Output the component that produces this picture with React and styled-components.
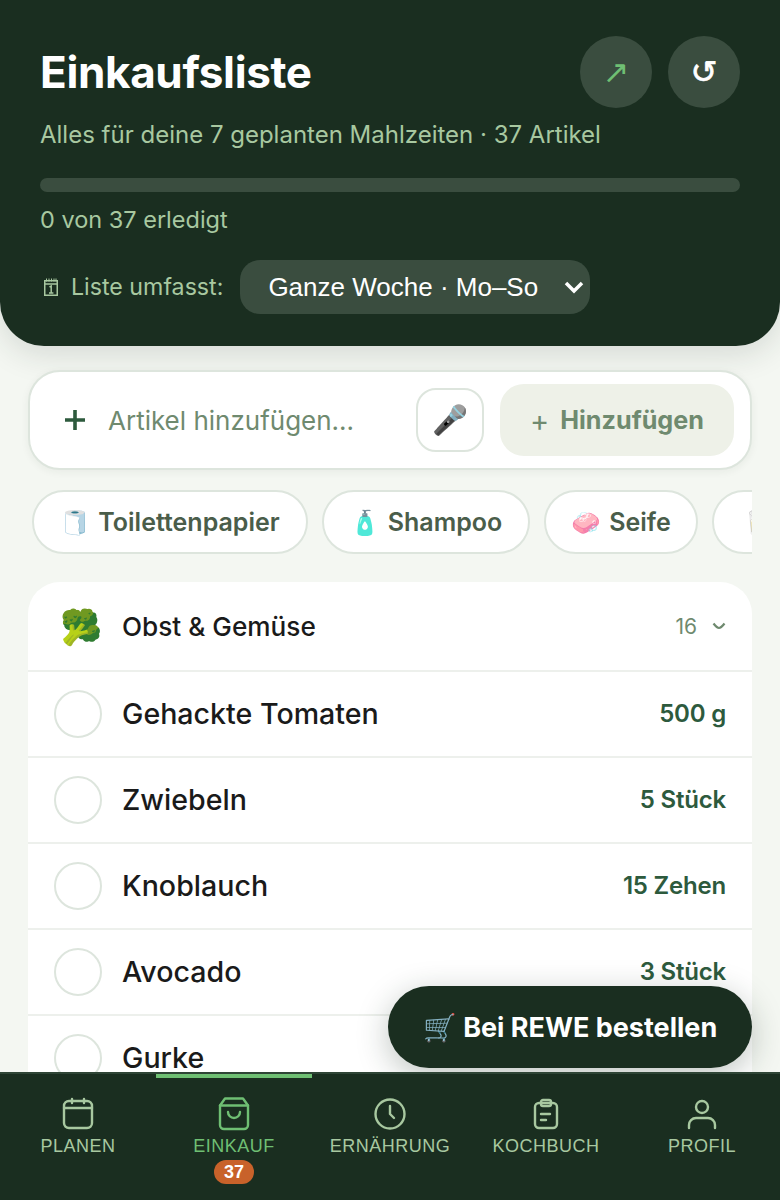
import React from 'react';
import styled, { createGlobalStyle } from 'styled-components';

const GlobalStyle = createGlobalStyle`
	html, body { margin: 0; padding: 0; background: #f4f7f2; }
	* { box-sizing: border-box; }
`;

const FONT = `"Inter", "Noto Sans", sans-serif`;

const chips = [
	{ emoji: '🧻', text: 'Toilettenpapier', width: 276 },
	{ emoji: '🧴', text: 'Shampoo', width: 208 },
	{ emoji: '🧼', text: 'Seife', width: 154 },
	{ emoji: '🥛', width: 120 },
];

const items = [
	{ name: 'Gehackte Tomaten', amount: '500 g' },
	{ name: 'Zwiebeln', amount: '5 Stück' },
	{ name: 'Knoblauch', amount: '15 Zehen' },
	{ name: 'Avocado', amount: '3 Stück' },
	{ name: 'Gurke' },
];

const CalendarIcon = () => (
	<NavSvg viewBox="0 0 36 36">
		<rect x="4" y="5" width="28" height="27" rx="5" />
		<path d="M4 12h28M12 3v4M24 3v4" />
	</NavSvg>
);

const BagIcon = () => (
	<NavSvg viewBox="0 0 36 36">
		<path d="M9 2.5h18l5 7V29a4 4 0 0 1-4 4H8a4 4 0 0 1-4-4V9.5z" />
		<path d="M4 9.5h28M12 16a6 6 0 0 0 12 0" />
	</NavSvg>
);

const ClockIcon = () => (
	<NavSvg viewBox="0 0 36 36">
		<circle cx="18" cy="18" r="14.5" />
		<path d="M18 10v8l4 4" />
	</NavSvg>
);

const ClipboardIcon = () => (
	<NavSvg viewBox="0 0 36 36">
		<rect x="7" y="7" width="22" height="25" rx="4" />
		<rect x="13" y="4" width="10" height="6" rx="2" />
		<path d="M13 18h9M13 24h5" />
	</NavSvg>
);

const PersonIcon = () => (
	<NavSvg viewBox="0 0 36 36">
		<circle cx="18" cy="11" r="6" />
		<path d="M5 32v-3a7 7 0 0 1 7-7h12a7 7 0 0 1 7 7v3" />
	</NavSvg>
);

const navItems = [
	{ label: 'PLANEN', Icon: CalendarIcon },
	{ label: 'EINKAUF', Icon: BagIcon, active: true, badge: 37 },
	{ label: 'ERNÄHRUNG', Icon: ClockIcon },
	{ label: 'KOCHBUCH', Icon: ClipboardIcon },
	{ label: 'PROFIL', Icon: PersonIcon },
];

export default function App() {
	return (
		<>
			<GlobalStyle />
			<Screen>
				<Content>
					<Header>
						<TitleRow>
							<Title>Einkaufsliste</Title>
							<HeaderActions>
								<RoundButton $color="#6fbf73">↗</RoundButton>
								<RoundButton $color="#ffffff" $heavy>↺</RoundButton>
							</HeaderActions>
						</TitleRow>
						<Subtitle>Alles für deine 7 geplanten Mahlzeiten · 37 Artikel</Subtitle>
						<ProgressTrack />
						<ProgressText>0 von 37 erledigt</ProgressText>
						<ScopeRow>
							<ScopeLabel>
								<ScopeIcon viewBox="0 0 14 18">
									<rect x="0.75" y="2.75" width="12.5" height="14.5" />
									<path d="M0.75 6h12.5" />
									<path d="M2.5 0.5v3M5 0.5v3M7.5 0.5v3M10 0.5v3M12 0.5v3" strokeWidth="1" />
									<path d="M5.5 9l1.7-1v7M5 15h4.4" />
								</ScopeIcon>
								Liste umfasst:
							</ScopeLabel>
							<SelectWrap>
								<ScopeSelect defaultValue="week">
									<option value="week">Ganze Woche · Mo–So</option>
								</ScopeSelect>
								<SelectChevron viewBox="0 0 20 14">
									<path d="M2 3l8 8 8-8" />
								</SelectChevron>
							</SelectWrap>
						</ScopeRow>
					</Header>

					<Body>
						<AddCard>
							<AddIcon viewBox="0 0 22 22">
								<path d="M11 1v20M1 11h20" />
							</AddIcon>
							<AddInput placeholder="Artikel hinzufügen..." />
							<MicButton>🎤</MicButton>
							<AddButton><AddPlus>+</AddPlus>Hinzufügen</AddButton>
						</AddCard>

						<ChipRow>
							{chips.map((chip) => (
								<Chip key={chip.emoji} $width={chip.width} $bare={!chip.text}>
									<ChipEmoji>{chip.emoji}</ChipEmoji>
									{chip.text}
								</Chip>
							))}
						</ChipRow>

						<ListCard>
							<CategoryRow>
								<CategoryEmoji>🥦</CategoryEmoji>
								<CategoryName>Obst &amp; Gemüse</CategoryName>
								<CategoryCount>16</CategoryCount>
								<CategoryChevron viewBox="0 0 14 8">
									<path d="M1.5 1.5Q5 6 7 6T12.5 1.5" />
								</CategoryChevron>
							</CategoryRow>
							{items.map((item) => (
								<ItemRow key={item.name}>
									<Check />
									<ItemName>{item.name}</ItemName>
									{item.amount && <ItemAmount>{item.amount}</ItemAmount>}
								</ItemRow>
							))}
						</ListCard>
					</Body>

					<OrderButton>🛒 Bei REWE bestellen</OrderButton>
				</Content>

				<Nav>
					{navItems.map(({ label, Icon, active, badge }) => (
						<NavItem key={label} $active={active}>
							<Icon />
							<NavLabel>{label}</NavLabel>
							{badge && <NavBadge>{badge}</NavBadge>}
						</NavItem>
					))}
				</Nav>
			</Screen>
		</>
	);
}

const Screen = styled.div`
	width: 780px;
	height: 1200px;
	display: flex;
	flex-direction: column;
	overflow: hidden;
	background: #f4f7f2;
	font-family: ${FONT};
`;

const Content = styled.main`
	position: relative;
	flex: 1;
	min-height: 0;
	overflow: hidden;
`;

const Header = styled.header`
	height: 346px;
	padding: 36px 40px 0;
	background: #1a2e20;
	border-radius: 0 0 44px 44px;
	box-shadow: 0 8px 32px rgba(26, 46, 32, 0.14);
`;

const TitleRow = styled.div`
	display: flex;
	align-items: center;
	justify-content: space-between;
	height: 72px;
`;

const Title = styled.h1`
	margin: 0;
	font-size: 44px;
	font-weight: 700;
	letter-spacing: -0.35px;
	color: #ffffff;
`;

const HeaderActions = styled.div`
	display: flex;
	gap: 16px;
`;

const RoundButton = styled.button`
	width: 72px;
	height: 72px;
	padding: 0;
	border: none;
	border-radius: 50%;
	background: #3a4d3f;
	color: ${(props) => props.$color};
	font-family: "DejaVu Sans", sans-serif;
	font-size: 32px;
	font-weight: 400;
	-webkit-text-stroke: ${(props) => (props.$heavy ? '0.7px' : '0')};
`;

const Subtitle = styled.p`
	margin: 10px 0 0;
	font-size: 24px;
	line-height: 34px;
	color: #a8c8a0;
`;

const ProgressTrack = styled.div`
	height: 14px;
	margin-top: 26px;
	border-radius: 7px;
	background: #3a4d3f;
`;

const ProgressText = styled.div`
	margin-top: 12px;
	font-size: 23.5px;
	line-height: 32px;
	color: #a8c8a0;
`;

const ScopeRow = styled.div`
	display: flex;
	align-items: center;
	gap: 17px;
	margin-top: 24px;
`;

const ScopeLabel = styled.span`
	display: flex;
	align-items: center;
	font-size: 23.2px;
	color: #a8c8a0;
`;

const ScopeIcon = styled.svg`
	flex: none;
	width: 14px;
	height: 18px;
	margin: 0 13px 0 4px;
	fill: none;
	stroke: #a8c8a0;
	stroke-width: 1.5;
`;

const SelectWrap = styled.div`
	position: relative;
	display: flex;
`;

const ScopeSelect = styled.select`
	width: 350px;
	height: 54px;
	padding: 0 28px;
	border: none;
	border-radius: 20px;
	background: #3a4d3f;
	color: #ffffff;
	font-family: "Liberation Sans", Arial, sans-serif;
	font-size: 26px;
	appearance: none;
`;

const SelectChevron = styled.svg`
	position: absolute;
	top: 20px;
	right: 6px;
	width: 20px;
	height: 14px;
	fill: none;
	stroke: #ffffff;
	stroke-width: 3.5;
	pointer-events: none;
`;

const Body = styled.div`
	padding: 24px 28px 0;
`;

const AddCard = styled.div`
	display: flex;
	align-items: center;
	height: 100px;
	padding: 0 16px 0 34px;
	background: #ffffff;
	border: 2px solid #dde5dd;
	border-radius: 32px;
	box-shadow: 0 2px 8px rgba(26, 46, 32, 0.06);
`;

const AddIcon = styled.svg`
	flex: none;
	width: 22px;
	height: 22px;
	margin-right: 22px;
	fill: none;
	stroke: #2d5a3d;
	stroke-width: 3.6;
`;

const AddInput = styled.input`
	flex: 1;
	min-width: 0;
	padding: 0;
	border: none;
	outline: none;
	background: transparent;
	font-family: ${FONT};
	font-size: 26px;
	&::placeholder { color: #6f8a6f; opacity: 1; }
`;

const MicButton = styled.button`
	flex: none;
	width: 68px;
	height: 64px;
	padding: 0;
	border: 2px solid #dde5dd;
	border-radius: 20px;
	background: #ffffff;
	font-size: 29px;
`;

const AddButton = styled.button`
	flex: none;
	display: flex;
	align-items: center;
	justify-content: center;
	width: 234px;
	height: 72px;
	margin-left: 16px;
	padding: 0;
	border: none;
	border-radius: 24px;
	background: #eef1e8;
	color: #6f8a6f;
	font-family: ${FONT};
	font-size: 25.2px;
	font-weight: 700;
`;

const AddPlus = styled.span`
	margin-right: 11px;
	font-size: 29px;
	font-weight: 400;
`;

const ChipRow = styled.div`
	display: flex;
	gap: 14px;
	margin-top: 20px;
	padding-left: 4px;
	overflow: hidden;
`;

const Chip = styled.button`
	flex: none;
	display: flex;
	align-items: center;
	justify-content: ${(props) => (props.$bare ? 'flex-start' : 'center')};
	gap: 8px;
	width: ${(props) => props.$width}px;
	height: 64px;
	padding: 0 ${(props) => (props.$bare ? '28px' : '0')};
	border: 2px solid #dde5dd;
	border-radius: 32px;
	background: #ffffff;
	color: #4a5d4a;
	font-family: ${FONT};
	font-size: 25px;
	font-weight: 600;
`;

const ChipEmoji = styled.span`
	font-size: 24px;
`;

const ListCard = styled.section`
	margin-top: 28px;
	background: #ffffff;
	border-radius: 32px 32px 0 0;
`;

const CategoryRow = styled.div`
	display: flex;
	align-items: center;
	height: 90px;
	padding: 0 26px 0 32px;
	border-bottom: 2px solid #edf0ec;
`;

const CategoryEmoji = styled.span`
	width: 62px;
	font-size: 34px;
`;

const CategoryName = styled.span`
	flex: 1;
	font-size: 26.2px;
	font-weight: 450;
	color: #1a1a1a;
`;

const CategoryCount = styled.span`
	margin-right: 15px;
	font-size: 21px;
	color: #6f8a6f;
`;

const CategoryChevron = styled.svg`
	width: 14px;
	height: 8px;
	fill: none;
	stroke: #6f8a6f;
	stroke-width: 2.2;
`;

const ItemRow = styled.div`
	display: flex;
	align-items: center;
	height: 86px;
	padding: 0 26px;
	border-bottom: 2px solid #edf0ec;
`;

const Check = styled.span`
	flex: none;
	width: 48px;
	height: 48px;
	margin-right: 20px;
	border: 2px solid #dde5dd;
	border-radius: 50%;
`;

const ItemName = styled.span`
	flex: 1;
	margin-top: -2px;
	font-size: 28.6px;
	font-weight: 450;
	color: #1a1a1a;
`;

const ItemAmount = styled.span`
	margin-top: -2px;
	font-size: 24px;
	font-weight: 600;
	letter-spacing: -0.2px;
	color: #2d5a3d;
`;

const OrderButton = styled.button`
	position: absolute;
	right: 28px;
	bottom: 4px;
	width: 364px;
	height: 82px;
	padding: 0;
	border: none;
	border-radius: 41px;
	background: #1a2e20;
	color: #ffffff;
	font-family: ${FONT};
	font-size: 27px;
	font-weight: 700;
	box-shadow: 0 8px 32px rgba(26, 46, 32, 0.28);
`;

const Nav = styled.nav`
	flex: none;
	display: grid;
	grid-template-columns: repeat(5, 156px);
	height: 128px;
	background: #1a2e20;
	border-top: 2px solid #2f4536;
	font-family: "Liberation Sans", Arial, sans-serif;
`;

const NavItem = styled.div`
	position: relative;
	display: flex;
	flex-direction: column;
	align-items: center;
	padding-top: 22px;
	color: ${(props) => (props.$active ? '#6fbf73' : '#a8c8a0')};

	${(props) => props.$active && `
		&::before {
			content: '';
			position: absolute;
			top: 0;
			left: 0;
			right: 0;
			height: 4px;
			background: #6fbf73;
		}
	`}
`;

const NavSvg = styled.svg`
	flex: none;
	width: 36px;
	height: 36px;
	fill: none;
	stroke: currentColor;
	stroke-width: 2.4;
	stroke-linecap: round;
	stroke-linejoin: round;
`;

const NavLabel = styled.span`
	margin-top: 2px;
	font-size: 18px;
	letter-spacing: 0.5px;
	line-height: 24px;
`;

const NavBadge = styled.span`
	width: 40px;
	height: 24px;
	margin-top: 2px;
	border-radius: 12px;
	background: #c8622a;
	color: #ffffff;
	font-size: 18px;
	font-weight: 700;
	line-height: 24px;
	text-align: center;
`;
